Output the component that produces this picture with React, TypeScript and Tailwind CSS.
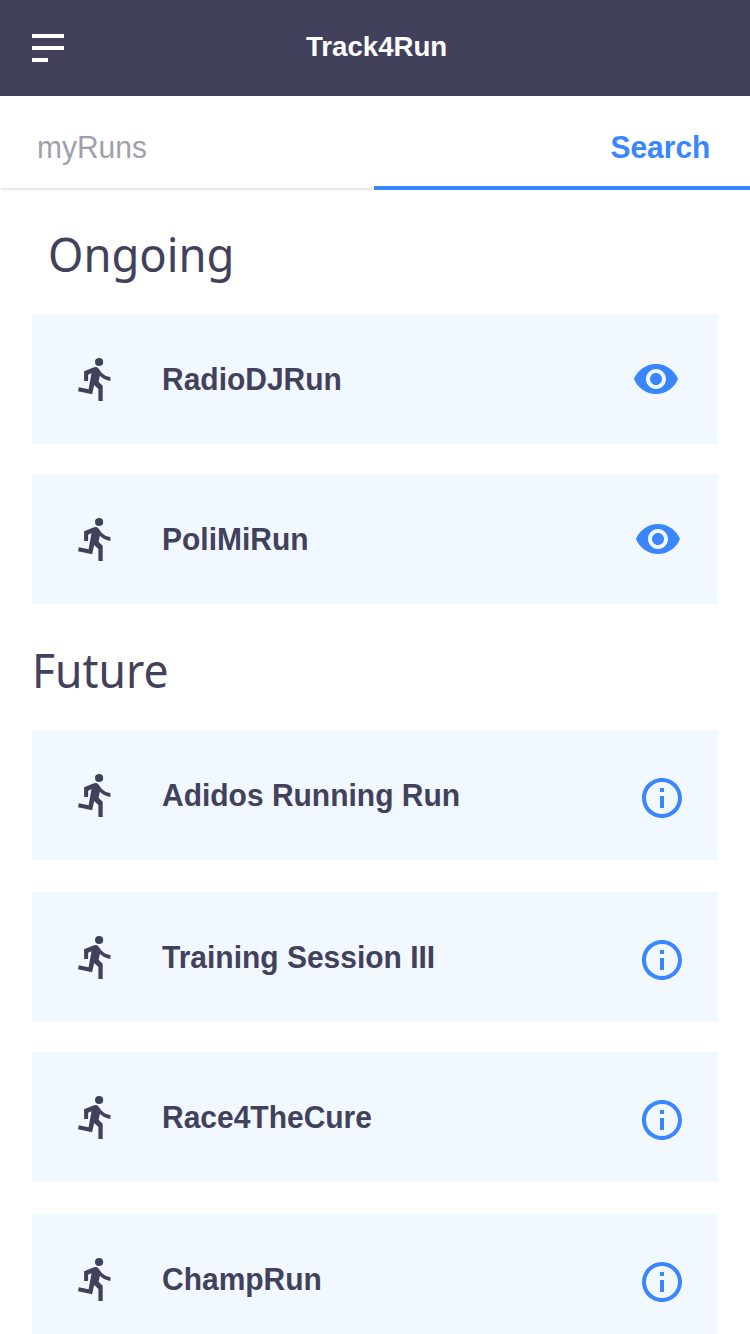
import React from "react";

function Runner() {
  return (
    <svg viewBox="0 0 48 48" className="h-12 w-12 shrink-0 fill-[#42415c]">
      <circle cx="27.1" cy="7" r="4.1" />
      <path d="M12.1 16.2L21.3 12.4Q24.6 11.1 26.5 13.4L29.2 17.3Q32.5 21.3 38.4 22V25.9Q32.2 25.3 27.9 20.8L26.6 26.7L30.7 30.7V46H26.4V33.9L22.2 30L20.1 39.3L6 36.2L6.8 32.3L16.6 34.2L19.5 18.3L16.1 19.7V26H12.1Z" />
    </svg>
  );
}

function Eye() {
  return (
    <svg viewBox="0 0 24 24" className="h-12 w-12 fill-[#3a86ff]">
      <path d="M12 4.5C7 4.5 2.73 7.61 1 12c1.73 4.39 6 7.5 11 7.5s9.27-3.11 11-7.5c-1.73-4.39-6-7.5-11-7.5zM12 17c-2.76 0-5-2.24-5-5s2.24-5 5-5 5 2.24 5 5-2.24 5-5 5zm0-8c-1.66 0-3 1.34-3 3s1.34 3 3 3 3-1.34 3-3-1.34-3-3-3z" />
    </svg>
  );
}

function Info() {
  return (
    <svg viewBox="0 0 24 24" className="mt-1.5 h-12 w-12 fill-[#3a86ff]">
      <path d="M11 17h2v-6h-2v6zm1-15C6.48 2 2 6.48 2 12s4.48 10 10 10 10-4.48 10-10S17.52 2 12 2zm0 18c-4.41 0-8-3.59-8-8s3.59-8 8-8 8 3.59 8 8-3.59 8-8 8zM11 9h2V7h-2v2z" />
    </svg>
  );
}

function Card({ name, icon, className }: { name: string; icon: React.ReactNode; className: string }) {
  return (
    <div className={`flex h-[130px] shrink-0 items-center bg-[#f1f8ff] pl-10 ${className}`}>
      <Runner />
      <span className="mt-0.5 ml-[42px] flex-1 origin-left scale-x-[0.967] whitespace-nowrap text-[31px] leading-9 font-bold">{name}</span>
      {icon}
    </div>
  );
}

export default function App() {
  return (
    <div className="flex h-[1334px] w-[750px] flex-col overflow-hidden bg-white font-['Liberation_Sans',Arial,sans-serif] text-[#42415c]">
      <header className="grid h-24 shrink-0 grid-cols-[1fr_auto_1fr] items-center bg-[#42415c] px-8">
        <div className="flex flex-col gap-2">
          <span className="h-1 w-8 bg-white" />
          <span className="h-1 w-8 bg-white" />
          <span className="h-1 w-4 bg-white" />
        </div>
        <h1 className="-mr-[3px] mb-0.5 scale-x-[0.987] text-[28px] leading-8 font-bold text-white">Track4Run</h1>
      </header>
      <nav className="flex h-[94px] shrink-0">
        <div className="ml-px flex w-[373px] items-center border-b-2 border-[#e9e9f2] pt-3 pl-9 text-[31px] text-[#a09fad] shadow-[0_1px_0_#f8f8fc]">
          <span className="origin-left scale-x-[0.967]">myRuns</span>
        </div>
        <div className="flex flex-1 items-center justify-end border-b-4 border-[#3a86ff] pt-3.5 pr-10 text-[31px] font-bold text-[#3a86ff]">
          <span className="origin-right scale-x-[0.967]">Search</span>
        </div>
      </nav>
      <h2 className="mt-[26px] ml-12 h-[98px] shrink-0 origin-left scale-x-[0.945] font-['Noto_Sans',sans-serif] text-[48px] leading-[76px] font-[370]">Ongoing</h2>
      <main className="flex flex-col px-8">
        <Card name="RadioDJRun" icon={<Eye />} className="pr-[38px]" />
        <Card name="PoliMiRun" icon={<Eye />} className="mt-[30px] pr-9" />
        <h2 className="mt-7 h-[98px] origin-left scale-x-[0.925] font-['Noto_Sans',sans-serif] text-[48px] leading-[76px] font-[370]">Future</h2>
        <Card name="Adidos Running Run" icon={<Info />} className="pr-8" />
        <Card name="Training Session III" icon={<Info />} className="mt-8 pr-8" />
        <Card name="Race4TheCure" icon={<Info />} className="mt-[30px] pr-8" />
        <Card name="ChampRun" icon={<Info />} className="mt-8 pr-8" />
      </main>
    </div>
  );
}
